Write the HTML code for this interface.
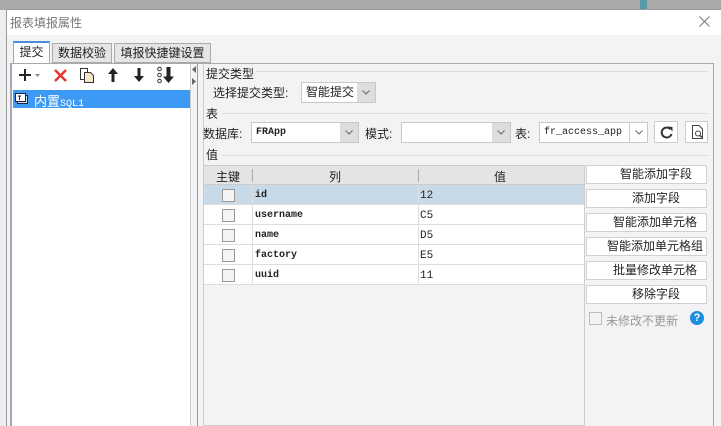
<html><head><style>
*{box-sizing:border-box;margin:0;padding:0}
body{width:721px;height:426px;overflow:hidden;background:#a9a9a9;font-family:"Liberation Sans","Noto Sans CJK SC",sans-serif;font-size:12px;color:#222;position:relative}
.a{position:absolute}
.mono{font-family:"Liberation Mono","Noto Sans CJK SC",monospace;font-size:11px}
.cb{position:absolute;width:13px;height:13px;border:1px solid #999;background:#f4f4f4}
.btn{position:absolute;left:586px;width:121px;height:19px;background:#fff;border:1px solid #d0d0d0;text-align:right;padding-right:14px;line-height:17px;font-size:12px}
.combo{position:absolute;background:#fff;border:1px solid #c8c8c8;height:21px;line-height:19px;padding-left:4px}
.dd{position:absolute;right:0;top:0;width:18px;height:19px;background:#ddd}
.dd svg{position:absolute;left:5px;top:7px}
.line{position:absolute;height:1px;background:#dcdcdc}
.t{font-size:12px}
</style></head><body>
<div class="a" style="left:0;top:10px;width:6px;height:416px;background:#eee"></div>
<div class="a" style="left:640px;top:0;width:7px;height:10px;background:#5a9aa8"></div>
<div class="a" style="left:6px;top:9px;width:715px;height:417px;background:#f3f3f5;border-top:1px solid #999;border-left:1px solid #999"></div>
<div class="a" style="left:7px;top:10px;width:714px;height:25px;background:#fff"></div>
<div class="a" style="left:10px;top:14px;font-size:12px;color:#777">报表填报属性</div>
<svg class="a" style="left:699px;top:16px" width="11" height="11"><path d="M0.5 0.5L10.5 10.5M10.5 0.5L0.5 10.5" stroke="#777" stroke-width="1"/></svg>
<!-- tabs -->
<div class="a" style="left:13px;top:41px;width:37px;height:22px;background:#fff;border:1px solid #9aa;border-bottom:none;border-top:2px solid #4a8fd6;text-align:center;line-height:18px;font-size:12px">提交</div>
<div class="a" style="left:52px;top:43px;width:60px;height:20px;background:#e5e5e8;border:1px solid #aaa;text-align:center;line-height:18px;font-size:12px">数据校验</div>
<div class="a" style="left:114px;top:43px;width:97px;height:20px;background:#e5e5e8;border:1px solid #aaa;text-align:center;line-height:18px;font-size:12px">填报快捷键设置</div>
<div class="a" style="left:10px;top:63px;width:704px;height:363px;border:1px solid #aaa;border-bottom:none;background:#f3f3f5"></div>
<!-- left panel -->
<div class="a" style="left:10px;top:64px;width:2px;height:362px;background:#a0a8b8"></div>
<div class="a" style="left:12px;top:64px;width:178px;height:362px;background:#fff"></div>
<div class="a" style="left:190px;top:64px;width:1px;height:362px;background:#ccc"></div>
<div class="a" style="left:197px;top:64px;width:1px;height:362px;background:#999"></div>
<div class="a" style="left:203px;top:64px;width:1px;height:362px;background:#ccc"></div>
<svg class="a" style="left:192px;top:66px" width="5" height="30"><path d="M4 0L0 3.5L4 7Z M0 12L4 15.5L0 19Z" fill="#666"/></svg>
<svg class="a" style="left:18px;top:68px" width="28" height="14"><path d="M1 7H13M7 1V13" stroke="#222" stroke-width="2"/><path d="M17 6H22L19.5 9Z" fill="#888"/></svg>
<svg class="a" style="left:54px;top:69px" width="13" height="13"><path d="M1 1L12 12M12 1L1 12" stroke="#e8322e" stroke-width="2.4"/></svg>
<svg class="a" style="left:79px;top:67px" width="16" height="17"><path d="M1.5 1.5H8.5V12.5H1.5Z" fill="#fff" stroke="#333"/><path d="M5.5 5.5H11.5L14.5 8.5V15.5H5.5Z" fill="#f5e8c8" stroke="#333"/></svg>
<svg class="a" style="left:107px;top:67px" width="12" height="16"><path d="M6 1L1 7H4.5V15H7.5V7H11Z" fill="#222"/></svg>
<svg class="a" style="left:133px;top:67px" width="12" height="16"><path d="M6 15L1 9H4.5V1H7.5V9H11Z" fill="#222"/></svg>
<svg class="a" style="left:157px;top:66px" width="18" height="18"><circle cx="2.5" cy="3" r="1.8" fill="none" stroke="#333"/><circle cx="2.5" cy="9" r="1.8" fill="none" stroke="#333"/><circle cx="2.5" cy="15" r="1.8" fill="none" stroke="#333"/><path d="M11.5 17L6 10.5H9.5V1H13.5V10.5H17Z" fill="#222"/></svg>
<div class="a" style="left:13px;top:90px;width:177px;height:18px;background:#3d9af4"></div>
<svg class="a" style="left:15px;top:93px" width="14" height="12"><path d="M2.5 2.5H12.5V10.5H2.5Z" fill="#cde" stroke="#224"/><path d="M0.5 0.5H10.5V8.5H0.5Z" fill="#fff" stroke="#224"/><path d="M3 3H6M4.5 3V7" stroke="#224"/></svg>
<div class="a" style="left:34px;top:91px;color:#fff;font-size:13px">内置<span class="mono" style="font-size:10px">SQL1</span></div>
<!-- right -->
<div class="a t" style="left:206px;top:65px">提交类型</div>
<div class="line" style="left:256px;top:71px;width:452px"></div>
<div class="a t" style="left:213px;top:84px">选择提交类型:</div>
<div class="combo" style="left:301px;top:82px;width:75px;font-size:12px">智能提交<div class="dd"><svg width="8" height="5"><path d="M0.5 0.5L4 4L7.5 0.5" fill="none" stroke="#666"/></svg></div></div>
<div class="a t" style="left:206px;top:105px">表</div>
<div class="line" style="left:222px;top:113px;width:486px"></div>
<div class="a t" style="left:203px;top:125px">数据库:</div>
<div class="combo mono" style="left:251px;top:122px;width:108px;font-weight:bold;font-size:10px">FRApp<div class="dd"><svg width="8" height="5"><path d="M0.5 0.5L4 4L7.5 0.5" fill="none" stroke="#666"/></svg></div></div>
<div class="a t" style="left:365px;top:125px">模式:</div>
<div class="combo" style="left:401px;top:122px;width:110px"><div class="dd"><svg width="8" height="5"><path d="M0.5 0.5L4 4L7.5 0.5" fill="none" stroke="#666"/></svg></div></div>
<div class="a t" style="left:515px;top:125px">表:</div>
<div class="combo mono" style="left:539px;top:122px;width:109px;font-size:10px">fr_access_app<div class="dd" style="border-left:1px solid #ccc;background:#fff"><svg width="8" height="5"><path d="M0.5 0.5L4 4L7.5 0.5" fill="none" stroke="#666"/></svg></div></div>
<div class="a" style="left:654px;top:121px;width:24px;height:22px;background:#fff;border:1px solid #ccc"><svg style="position:absolute;left:5px;top:4px" width="13" height="13"><path d="M10.5 3.2A5 5 0 1 0 11.5 8" fill="none" stroke="#333" stroke-width="2"/><path d="M8 0.5L12.5 1V5.5Z" fill="#333"/></svg></div>
<div class="a" style="left:685px;top:121px;width:23px;height:22px;background:#fff;border:1px solid #ccc"><svg style="position:absolute;left:5px;top:3px" width="13" height="15"><path d="M1.5 0.5H8L11.5 4V13.5H1.5Z" fill="#fff" stroke="#444"/><circle cx="7" cy="8.5" r="2.5" fill="none" stroke="#444"/><path d="M8.8 10.3L11 12.5" stroke="#444" stroke-width="1.5"/></svg></div>
<div class="a t" style="left:206px;top:146px">值</div>
<div class="line" style="left:222px;top:155px;width:486px"></div>
<!-- table -->
<div class="a" style="left:203px;top:165px;width:382px;height:261px;border:1px solid #ccc;background:#f3f3f5"></div>
<div class="a" style="left:204px;top:166px;width:380px;height:19px;background:#e4e4e4;border-bottom:1px solid #ccc"></div>
<div class="a t" style="left:216px;top:168px">主键</div>
<div class="a" style="left:252px;top:169px;width:1px;height:13px;background:#aaa"></div>
<div class="a t" style="left:329px;top:168px">列</div>
<div class="a" style="left:418px;top:169px;width:1px;height:13px;background:#aaa"></div>
<div class="a t" style="left:494px;top:168px">值</div>
<div class="a" style="left:204px;top:185px;width:380px;height:100px;background:#fff"></div>
<div class="a" style="left:204px;top:185px;width:380px;height:20px;background:#c8dae8"></div>
<div class="a" style="left:204px;top:204px;width:380px;height:1px;background:#ddd"></div>
<div class="a" style="left:204px;top:224px;width:380px;height:1px;background:#ddd"></div>
<div class="a" style="left:204px;top:244px;width:380px;height:1px;background:#ddd"></div>
<div class="a" style="left:204px;top:264px;width:380px;height:1px;background:#ddd"></div>
<div class="a" style="left:204px;top:284px;width:380px;height:1px;background:#ddd"></div>
<div class="a" style="left:252px;top:185px;width:1px;height:100px;background:#ddd"></div>
<div class="a" style="left:418px;top:185px;width:1px;height:100px;background:#ddd"></div>
<div class="cb" style="left:222px;top:189px"></div>
<div class="cb" style="left:222px;top:209px"></div>
<div class="cb" style="left:222px;top:229px"></div>
<div class="cb" style="left:222px;top:249px"></div>
<div class="cb" style="left:222px;top:269px"></div>
<div class="a mono" style="left:255px;top:186px;font-weight:bold;font-size:10px;line-height:20px">id<br>username<br>name<br>factory<br>uuid</div>
<div class="a mono" style="left:420px;top:186px;font-size:11px;line-height:20px">12<br>C5<br>D5<br>E5<br>11</div>
<div class="btn" style="top:165px">智能添加字段</div>
<div class="btn" style="top:189px;padding-right:26px">添加字段</div>
<div class="btn" style="top:213px;padding-right:9px">智能添加单元格</div>
<div class="btn" style="top:237px;padding-right:3px">智能添加单元格组</div>
<div class="btn" style="top:261px;padding-right:9px">批量修改单元格</div>
<div class="btn" style="top:285px;padding-right:26px">移除字段</div>
<div class="cb" style="left:589px;top:312px;background:#f3f3f5;border-color:#bbb"></div>
<div class="a t" style="left:606px;top:312px;color:#999">未修改不更新</div>
<div class="a" style="left:690px;top:311px;width:14px;height:14px;border-radius:50%;background:#1a8fe0;color:#fff;font-size:11px;font-weight:bold;text-align:center;line-height:14px">?</div>
</body></html>
